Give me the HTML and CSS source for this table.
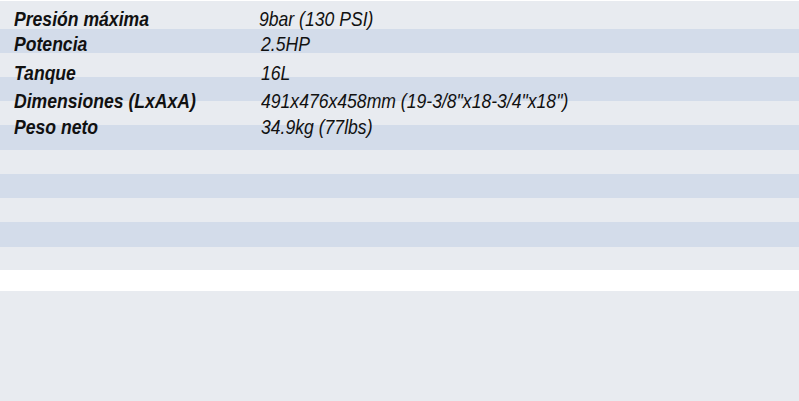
FILE: index.html
```html
<!DOCTYPE html>
<html lang="es">
<head>
<meta charset="utf-8">
<link rel="stylesheet" href="styles.css">
</head>
<body>
<div class="specs">
  <div class="row light r1"><span class="label">Presión máxima</span><span class="value v-first">9bar (130 PSI)</span></div>
  <div class="row blue r2"><span class="label">Potencia</span><span class="value">2.5HP</span></div>
  <div class="row light r3"><span class="label">Tanque</span><span class="value">16L</span></div>
  <div class="row blue r4"><span class="label">Dimensiones (LxAxA)</span><span class="value">491x476x458mm (19-3/8"x18-3/4"x18")</span></div>
  <div class="row light r5"><span class="label">Peso neto</span><span class="value">34.9kg (77lbs)</span></div>
  <div class="row blue tall"></div>
  <div class="row light"></div>
  <div class="row blue"></div>
  <div class="row light"></div>
  <div class="row blue tall"></div>
  <div class="row light short"></div>
</div>
<div class="panel"></div>
</body>
</html>
```
FILE: styles.css
```css
html, body {
  margin: 0;
  padding: 0;
  background: #ffffff;
}
body {
  width: 799px;
  height: 401px;
  overflow: hidden;
  font-family: "Liberation Sans", Arial, sans-serif;
  color: #111111;
}
.specs {
  padding-top: 1px;
  margin-bottom: 21px;
}
.row {
  height: 24px;
  display: grid;
  grid-template-columns: 245px 1fr;
  padding-left: 14px;
  box-sizing: border-box;
  font-size: 17.6px;
  line-height: 24px;
  font-style: italic;
  white-space: nowrap;
}
.row span {
  display: block;
  height: 24px;
  padding-top: 5px;
  transform: scaleY(1.1);
  transform-origin: 0 23px;
}
.r1 {
  height: 28px;
}
.r1 span {
  padding-top: 7px;
  transform-origin: 0 25px;
}
.r2 span {
  padding-top: 4px;
  transform-origin: 0 22px;
}
.r3 span {
  padding-top: 9px;
  transform-origin: 0 27px;
}
.r4 span {
  padding-top: 13px;
  transform-origin: 0 31px;
}
.r5 span {
  padding-top: 15px;
  transform-origin: 0 33px;
}
.tall {
  height: 25px;
}
.short {
  height: 23px;
}
.light {
  background: #e8ebf0;
}
.blue {
  background: #d3dcea;
}
.label {
  font-weight: bold;
}
.value {
  padding-left: 2px;
}
.value.v-first {
  padding-left: 0;
}
.panel {
  height: 110px;
  background: #e8ebf0;
}
```
